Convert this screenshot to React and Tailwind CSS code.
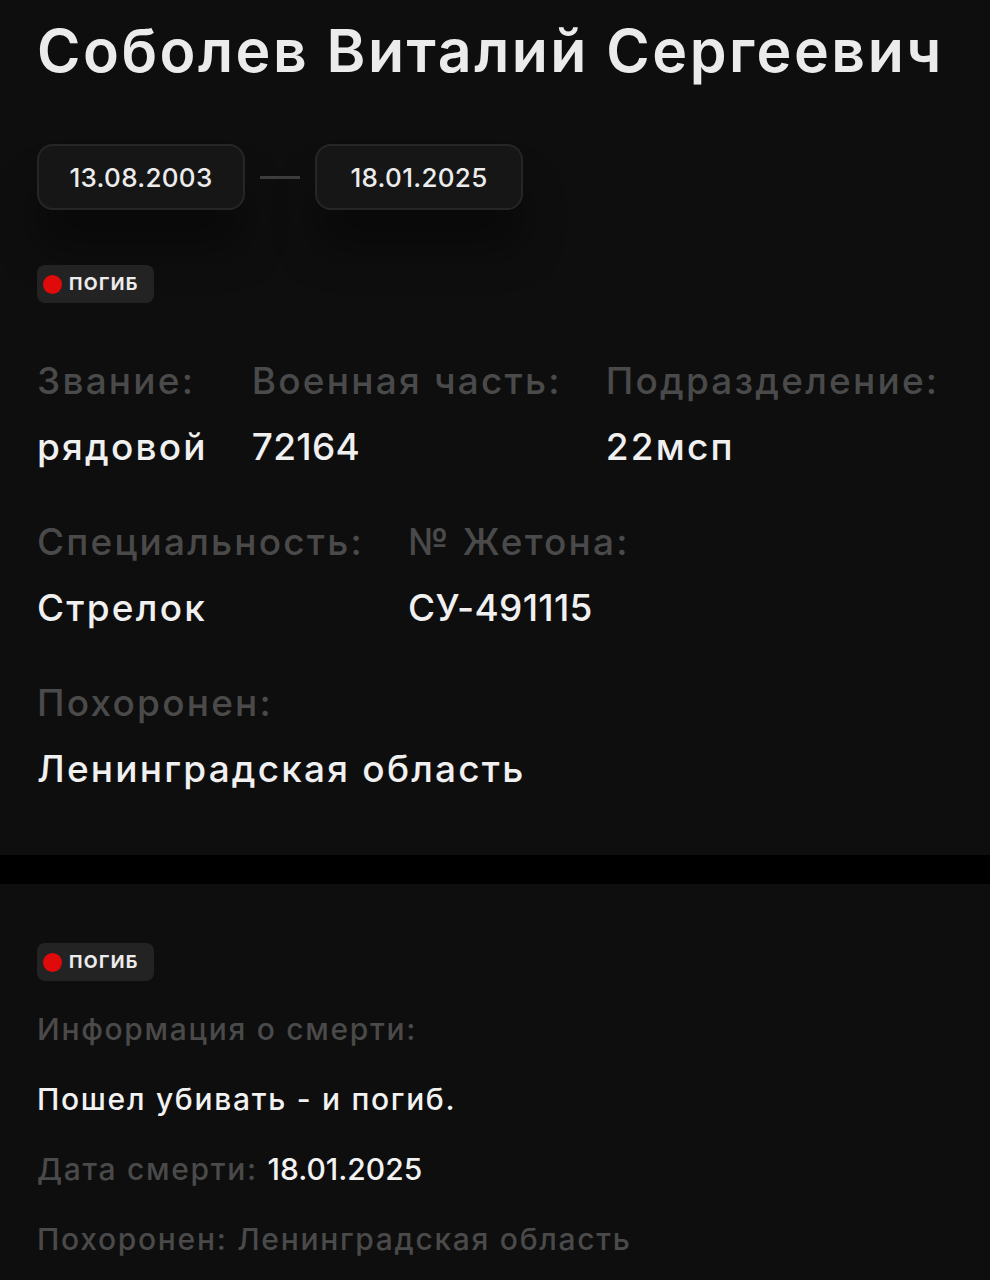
import React from 'react';

const font = { fontFamily: 'Inter, "Noto Sans", sans-serif' };

const Badge = () => (
    <div className="inline-flex items-center gap-[7px] h-[38px] pl-[6px] pr-[15px] rounded-[8px] bg-[#232323]">
        <span className="w-[19px] h-[19px] rounded-full bg-[#e10a0a]" />
        <span className="text-[18px] font-bold uppercase tracking-[1.3px] text-[#ececec] leading-none">погиб</span>
    </div>
);

// numbers are tighter than words in the original font
const Field = ({ label, value, numeric }) => (
    <div className="flex flex-col gap-[26px]">
        <span className="text-[37px] leading-[40px] font-medium tracking-[2.2px] text-[#4a4a4a] whitespace-nowrap">{label}</span>
        <span className={`text-[37px] leading-[40px] font-medium text-[#f0f0f0] whitespace-nowrap ${numeric ? 'tracking-[0.3px]' : 'tracking-[2.2px]'}`}>
            {value}
        </span>
    </div>
);

const DatePill = ({ children }) => (
    <div className="w-[208px] h-[66px] flex items-center justify-center rounded-[16px] border-2 border-[#262626] bg-[#161616] shadow-[0_40px_40px_rgba(0,0,0,0.35)] text-[26px] font-medium text-[#ececec] tracking-[0.3px]">
        {children}
    </div>
);

export default function App() {
    return (
        <div style={font} className="w-[990px] min-h-[1280px] bg-[#0e0e0e]">
            <section className="h-[855px] pl-[37px] pt-[16px]">
                <h1 className="text-[59px] leading-[70px] font-semibold text-[#ebebeb] tracking-[2.5px] whitespace-nowrap">
                    Соболев Виталий Сергеевич
                </h1>

                <div className="flex items-center gap-[15px] mt-[58px]">
                    <DatePill>13.08.2003</DatePill>
                    <span className="w-[40px] h-[3px] bg-[#3d3d3d]" />
                    <DatePill>18.01.2025</DatePill>
                </div>

                <div className="mt-[55px]">
                    <Badge />
                </div>

                <div className="mt-[58px] flex gap-[44px]">
                    <Field label="Звание:" value="рядовой" />
                    <Field label="Военная часть:" value="72164" numeric />
                    <Field label="Подразделение:" value="22мсп" />
                </div>

                <div className="mt-[55px] flex gap-[44px]">
                    <Field label="Специальность:" value="Стрелок" />
                    <Field label="№ Жетона:" value="СУ-491115" numeric />
                </div>

                <div className="mt-[55px]">
                    <Field label="Похоронен:" value="Ленинградская область" />
                </div>
            </section>

            <div className="h-[29px] bg-black" />

            <section className="pl-[37px] pt-[59px] pb-[20px]">
                <Badge />
                <div className="mt-[30px] flex flex-col gap-[34px] text-[30px] leading-[36px] font-medium tracking-[1.7px]">
                    <span className="text-[#4a4a4a]">Информация о смерти:</span>
                    <span className="text-[#f2f2f2]">Пошел убивать - и погиб.</span>
                    <span className="text-[#4a4a4a]">
                        Дата смерти: <span className="text-[#f2f2f2] tracking-[0px]">18.01.2025</span>
                    </span>
                    <span className="text-[#4a4a4a]">Похоронен: Ленинградская область</span>
                </div>
            </section>
        </div>
    );
}
